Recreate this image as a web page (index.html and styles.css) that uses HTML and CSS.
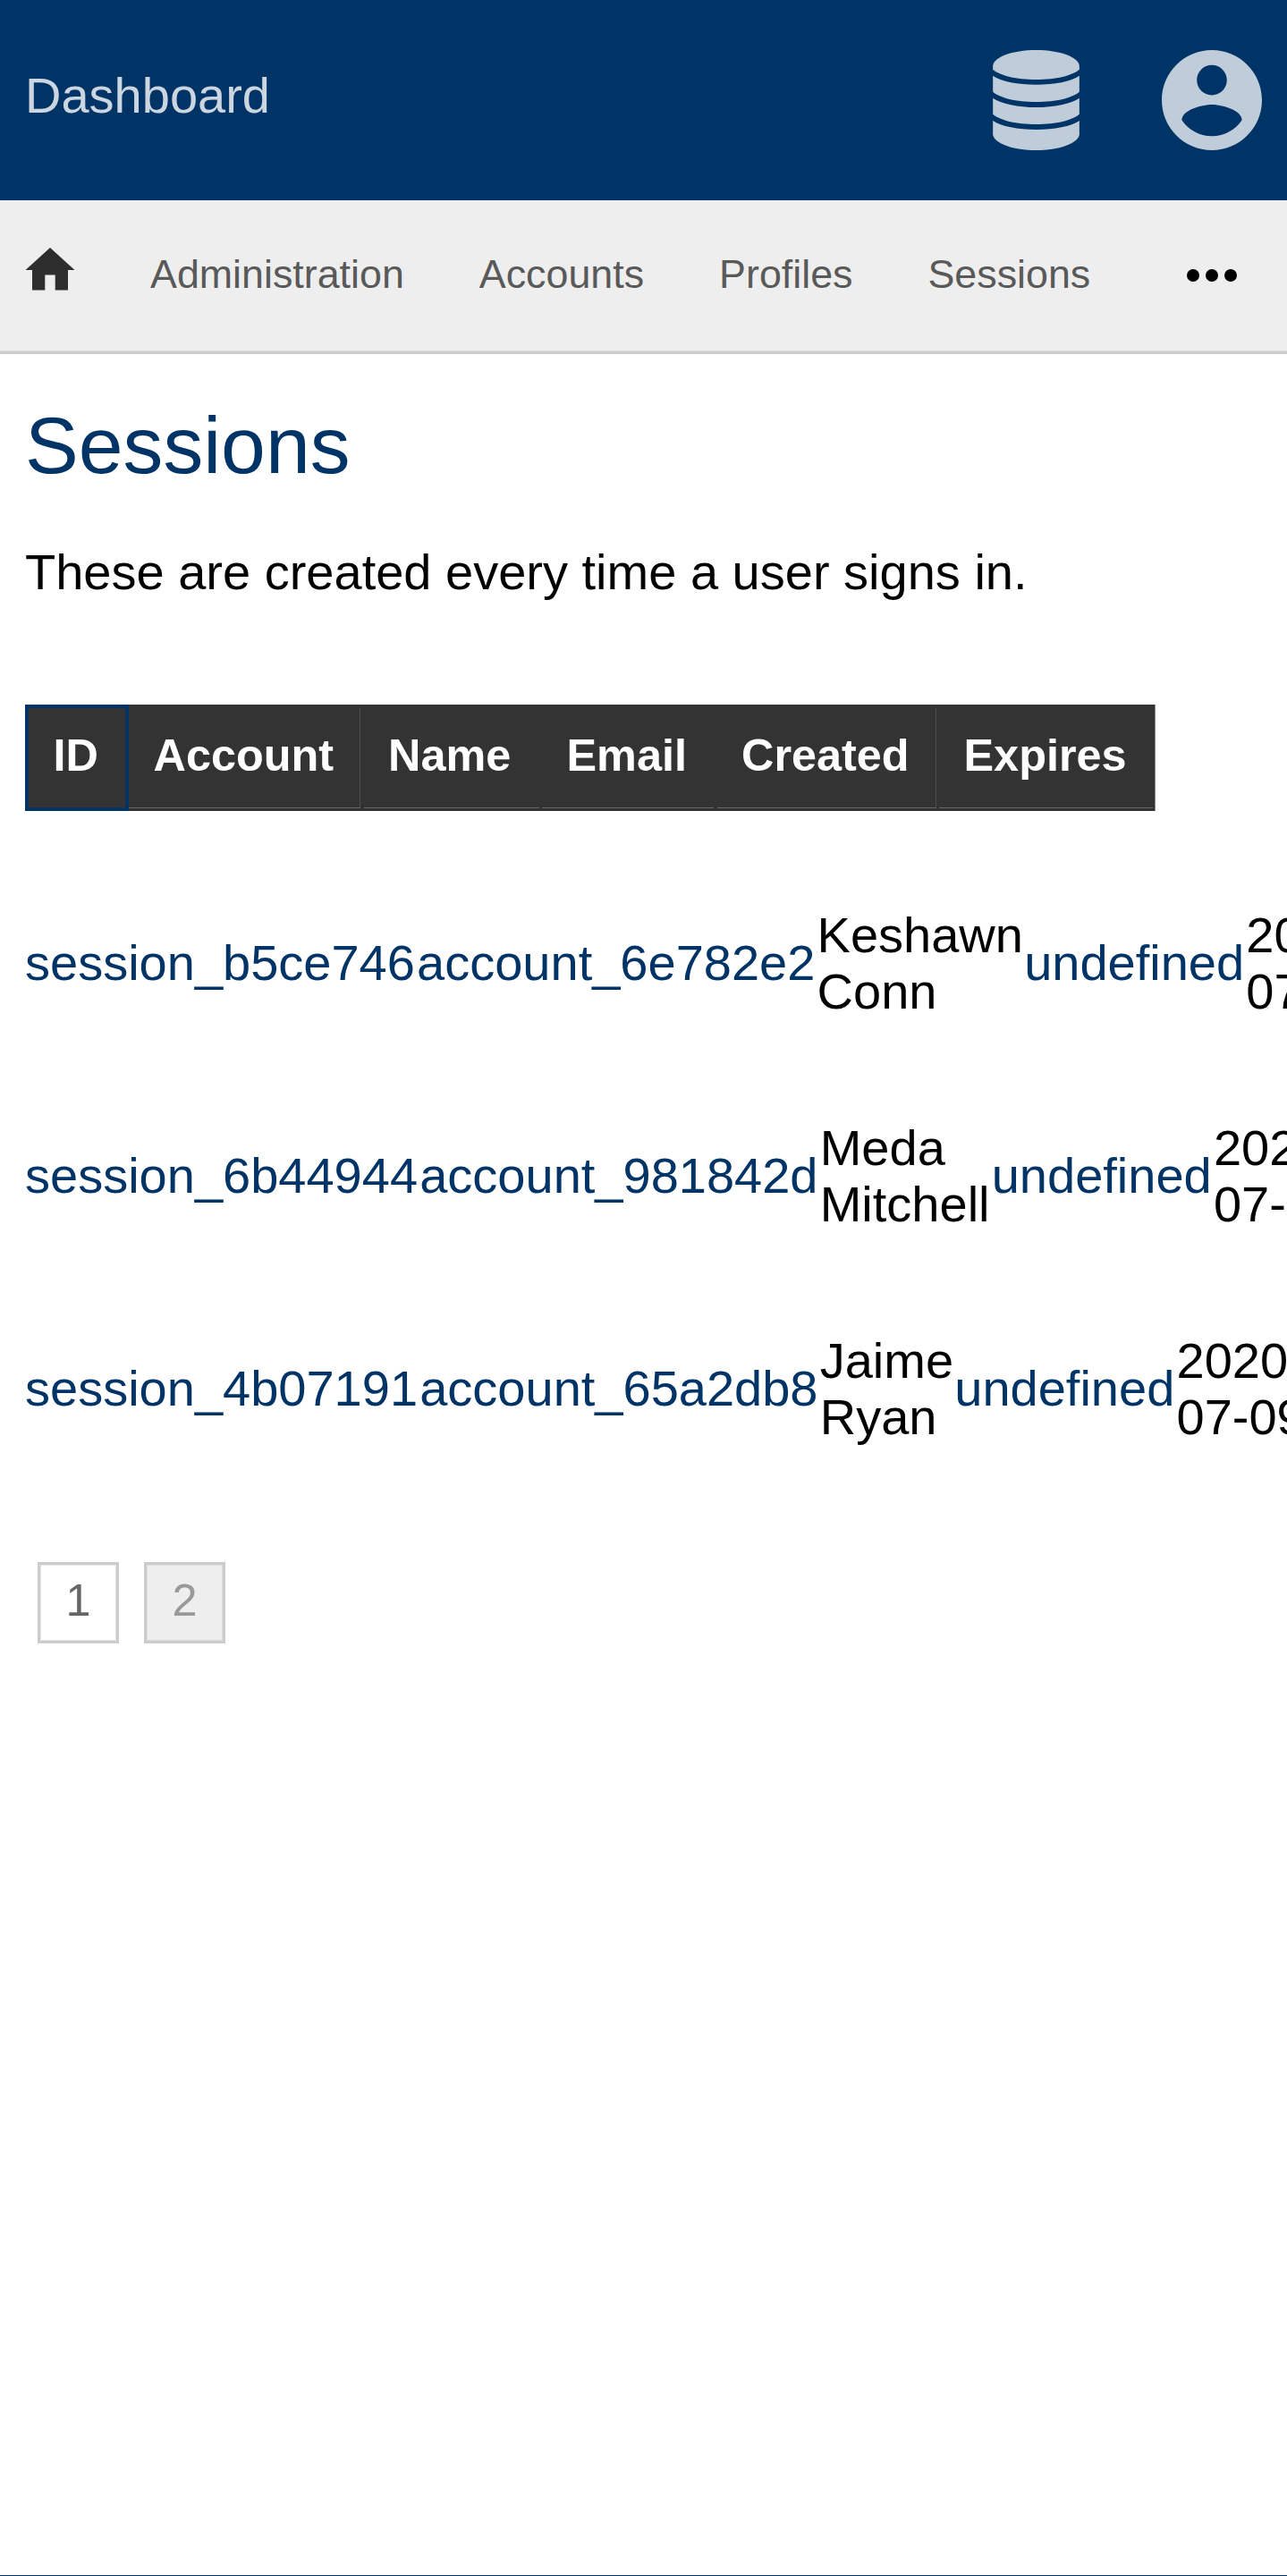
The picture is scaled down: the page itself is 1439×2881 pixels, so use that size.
FILE: index.html
```html
<!DOCTYPE html>
<html lang="en">
<head>
<meta charset="utf-8">
<title>Sessions</title>
<link rel="stylesheet" href="styles.css">
</head>
<body>
<header class="topbar">
  <a class="brand">Dashboard</a>
  <div class="tools">
    <svg class="icon-db" viewBox="93 78 290 336">
      <path d="M93 132C93 102 158 78 238 78S383 102 383 132V143C360 163 305 177 238 177S116 163 93 143Z"/>
      <path d="M93 164C120 183 178 194 238 194S356 183 383 164V218C360 238 305 252 238 252S116 238 93 218Z"/>
      <path d="M93 239C120 258 178 270 238 270S356 258 383 239V293C360 313 305 327 238 327S116 313 93 293Z"/>
      <path d="M93 315C120 334 178 345 238 345S356 334 383 315V362C378 391 315 414 238 414S98 391 93 362Z"/>
    </svg>
    <svg class="icon-user" viewBox="2 2 20 20">
      <path d="M12 2C6.48 2 2 6.48 2 12s4.48 10 10 10 10-4.48 10-10S17.52 2 12 2zm0 3c1.66 0 3 1.34 3 3s-1.34 3-3 3-3-1.34-3-3 1.34-3 3-3zm0 14.2c-2.5 0-4.71-1.28-6-3.22.03-1.99 4-3.08 6-3.08 1.99 0 5.97 1.09 6 3.08-1.29 1.94-3.5 3.22-6 3.22z"/>
    </svg>
  </div>
</header>
<nav class="menu">
  <svg class="icon-home" viewBox="0 0 56 48"><path d="M28 0L55.5 25H48V47.5H33.7V30.5H22.3V47.5H8V25H.5Z"/></svg>
  <a>Administration</a>
  <a>Accounts</a>
  <a>Profiles</a>
  <a>Sessions</a>
  <svg class="icon-more" viewBox="0 0 56 14"><circle cx="7" cy="7" r="7"/><circle cx="28" cy="7" r="7"/><circle cx="49" cy="7" r="7"/></svg>
</nav>
<main class="content">
  <h1>Sessions</h1>
  <p class="intro">These are created every time a user signs in.</p>
  <div class="thead">
    <div class="th th-id">ID</div>
    <div class="th th-account lined">Account</div>
    <div class="th th-name">Name</div>
    <div class="th th-email">Email</div>
    <div class="th th-created lined">Created</div>
    <div class="th th-expires">Expires</div>
  </div>
  <div class="rows">
    <div class="row"><a>session_b5ce746</a><a>account_6e782e2</a><span>Keshawn<br>Conn</span><a class="email">undefined</a><span>2020-<br>07-09</span></div>
    <div class="row"><a>session_6b44944</a><a>account_981842d</a><span>Meda<br>Mitchell</span><a>undefined</a><span>2020-<br>07-09</span></div>
    <div class="row"><a>session_4b07191</a><a>account_65a2db8</a><span>Jaime<br>Ryan</span><a class="email">undefined</a><span>2020-<br>07-09</span></div>
  </div>
  <div class="pages">
    <a class="page">1</a>
    <a class="page current">2</a>
  </div>
</main>
<footer class="footer"></footer>
</body>
</html>
```
FILE: styles.css
```css
* { box-sizing: border-box; }

body {
  margin: 0;
  height: 2881px;
  display: flex;
  flex-direction: column;
  background: #fff;
  color: #000;
  font: 56px/63px "Liberation Sans", Arial, sans-serif;
}

svg { display: block; flex: none; }

.topbar {
  height: 224px;
  flex: none;
  padding: 0 28px;
  display: flex;
  align-items: center;
  justify-content: space-between;
  background: #003366;
}
.brand { color: #ccd6e0; padding-bottom: 11px; }
.tools { display: flex; gap: 92px; fill: #bfccd9; }
.icon-db { width: 97px; height: 112px; }
.icon-user { width: 112px; height: 112px; }

.menu {
  height: 172px;
  flex: none;
  padding: 0 56px 0 28px;
  display: flex;
  align-items: center;
  gap: 84px;
  background: #eee;
  border-bottom: 3px solid #ccc;
  box-shadow: inset 0 -1px #ddd;
  font-size: 44.8px;
  line-height: 52px;
  color: #595959;
}
.menu a { padding-bottom: 5px; }
.icon-home { width: 56px; height: 48px; fill: #2e2e2e; margin-bottom: 15px; }
.icon-more { width: 56px; height: 14px; margin: 0 0 1px auto; }

.content { flex: 1; min-width: 0; padding: 52px 28px 0; }

h1 {
  margin: 0;
  font-size: 89.6px;
  line-height: 101px;
  font-weight: 400;
  color: #003366;
}
.intro { margin: 59px 0 117px; }

.thead {
  display: flex;
  width: 1264px;
  height: 119px;
  background: #333;
  box-shadow: inset -1px 0 #888;
  color: #fff;
  font-size: 50.4px;
  font-weight: 700;
  line-height: 56px;
}
.th {
  flex: none;
  padding: 25px 0 0 27.5px;
  margin: 4px 3.5px 3px 0;
  box-shadow: inset 0 -1px #666;
  white-space: nowrap;
}
.lined { box-shadow: inset 0 -1px #666, inset -1px 0 #4d4d4d; }
.th-id {
  width: 116px;
  margin: 0;
  padding: 26px 0 0 28.5px;
  border: 3px solid #003366;
  box-shadow: inset 0 0 0 1px #0d335a;
}
.th-account { width: 259px; }
.th-name { width: 196px; }
.th-email { width: 192px; }
.th-created { width: 245px; }
.th-expires { width: 238.5px; }

.rows { margin: 107px -28px 19px 0; overflow: hidden; }
.row {
  display: flex;
  align-items: center;
  gap: 2.2px;
  height: 126px;
  margin-bottom: 112px;
  white-space: nowrap;
}
.row > * { flex: none; }
.row a { color: #003366; padding-bottom: 1px; }
.row .email { margin-left: -1px; }

.pages { display: flex; gap: 28px; padding: 0 14px; font-size: 50.4px; line-height: 56px; }
.page {
  width: 91px;
  height: 91px;
  padding-top: 12px;
  border: 3px solid #ccc;
  box-shadow: inset 0 0 0 1px #e5e5e5;
  text-align: center;
  color: #666;
}
.current { background: #eee; color: #999; box-shadow: inset 0 0 0 1px #ddd; }

.footer { height: 1px; flex: none; background: #003366; }
```
